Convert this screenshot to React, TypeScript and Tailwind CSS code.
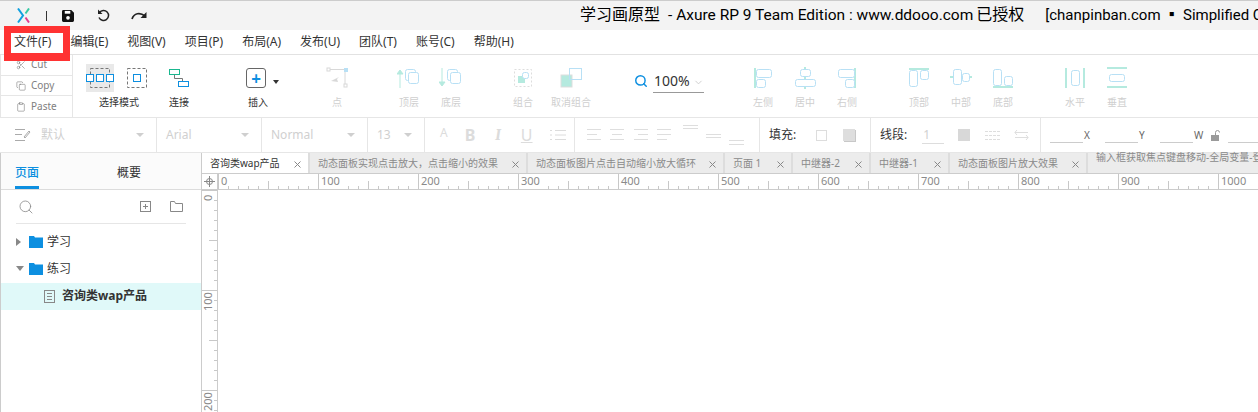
import { ChevronDown, Clipboard, Copy, Scissors, Search } from 'lucide-react';

const menus = ['编辑(E)', '视图(V)', '项目(P)', '布局(A)', '发布(U)', '团队(T)', '账号(C)', '帮助(H)'];

const tabs = [
    { title: '咨询类wap产品', width: 'w-[108px]' },
    { title: '动态面板实现点击放大，点击缩小的效果', width: 'w-[218px]' },
    { title: '动态面板图片点击自动缩小放大循环', width: 'w-[197px]' },
    { title: '页面 1', width: 'w-[68px]' },
    { title: '中继器-2', width: 'w-[78px]' },
    { title: '中继器-1', width: 'w-[79px]' },
    { title: '动态面板图片放大效果', width: 'w-[138px]' },
];

const clipboardItems = [
    { label: 'Cut', icon: Scissors },
    { label: 'Copy', icon: Copy },
    { label: 'Paste', icon: Clipboard },
];

function Box({ x, y, w, h }: { x: number; y: number; w: number; h: number }) {
    return <rect x={x + 0.5} y={y + 0.5} width={w} height={h} rx={2} fill="white" stroke="#b8e0f5" />;
}

function Bar({ x, y, w, h }: { x: number; y: number; w: number; h: number }) {
    return <rect x={x} y={y} width={w} height={h} fill="#b5eadf" />;
}

function ToolItem({
    label,
    width,
    dim = true,
    children,
}: {
    label: string;
    width: string;
    dim?: boolean;
    children: React.ReactNode;
}) {
    return (
        <div className={`flex shrink-0 flex-col items-center ${width}`}>
            <div className="flex h-[36px] items-center justify-center">{children}</div>
            <div className={`-mt-[1px] text-[10px] leading-[14px] ${dim ? 'text-[#cfcfcf]' : 'text-[#333]'}`}>
                {label}
            </div>
        </div>
    );
}

function Icon({ children, w = 24 }: { children: React.ReactNode; w?: number }) {
    return (
        <svg width={w} height={24} viewBox={`0 0 ${w} 24`}>
            {children}
        </svg>
    );
}

function Caret() {
    return <span className="h-0 w-0 border-x-[4px] border-t-[4px] border-x-transparent border-t-[#cfcfcf]" />;
}

function FormatCell({ label, width, icon }: { label: string; width: string; icon?: boolean }) {
    return (
        <div className={`flex shrink-0 items-center justify-between border-r border-[#e6e6e6] pr-[12px] ${width}`}>
            <div className="flex items-center">
                {icon && (
                    <svg width={16} height={14} viewBox="0 0 16 14" className="ml-[15px] mr-[10px]">
                        <path d="M0 1.5h10M0 6.5h7M0 12.5h10" stroke="#aaa" fill="none" />
                        <path d="M9 9l5-6 1 1-5 6z" stroke="#aaa" fill="none" />
                    </svg>
                )}
                <span className={`text-[12px] text-[#d0d0d0] ${icon ? '' : 'ml-[9px]'}`}>{label}</span>
            </div>
            <Caret />
        </div>
    );
}

function HorizontalRuler() {
    const ticks = Array.from({ length: 105 }, (_, i) => i);
    // ticks right after a label are hidden by the number
    const hidden = (i: number) => {
        if (i < 10) return false;
        const step = i % 10;
        return step === 1 || step === 2 || (i >= 100 && step === 3);
    };
    return (
        <svg width={1041} height={15} className="block">
            {ticks
                .filter((i) => !hidden(i))
                .map((i) => {
                    const x = i * 10 + 0.5;
                    const h = i % 10 === 0 ? 15 : i % 5 === 0 ? 8 : 3;
                    return <line key={i} x1={x} x2={x} y1={15 - h} y2={15} stroke="#c8c8c8" />;
                })}
            {Array.from({ length: 11 }, (_, i) => (
                <text key={i} x={i * 100 + 3} y={11} fontSize={11} fill="#8a8a8a">
                    {i * 100}
                </text>
            ))}
        </svg>
    );
}

function VerticalRuler() {
    const ticks = Array.from({ length: 23 }, (_, i) => i);
    return (
        <svg width={15} height={222} className="block shrink-0">
            {ticks.map((i) => {
                const y = i * 10 + 0.5;
                const w = i % 10 === 0 ? 15 : i % 5 === 0 ? 8 : 3;
                return <line key={i} y1={y} y2={y} x1={15 - w} x2={15} stroke="#c8c8c8" />;
            })}
            {[0, 100, 200].map((n) => (
                <text
                    key={n}
                    x={0}
                    y={0}
                    fontSize={11}
                    fill="#8a8a8a"
                    transform={`translate(10 ${n + 3 + (n === 0 ? 8 : 18)}) rotate(-90)`}
                >
                    {n}
                </text>
            ))}
        </svg>
    );
}

function Folder() {
    return (
        <svg width={14} height={12} viewBox="0 0 14 12" className="shrink-0">
            <path d="M0 0h5l1 1.5h8V12H0z" fill="#0d8fe0" />
        </svg>
    );
}

function CloseIcon() {
    return (
        <svg width={7} height={7} viewBox="0 0 7 7" className="mt-[2px] shrink-0">
            <path d="M0.5 0.5l6 6M6.5 0.5l-6 6" stroke="#888" />
        </svg>
    );
}

export default function App() {
    return (
        <div
            className="relative h-[412px] w-[1258px] overflow-hidden bg-white text-[12px] text-[#333]"
            style={{ fontFamily: '"Noto Sans", "Noto Sans CJK SC", sans-serif' }}
        >
            {/* title bar */}
            <div className="flex h-[30px] items-center overflow-hidden border-t border-[#cccccc] bg-[#f3f3f3]">
                <svg width={13} height={15} viewBox="0 0 13 15" className="ml-[17px] shrink-0">
                    <path d="M1 0.5l5 7-5 7" stroke="#10a0e0" strokeWidth={2} fill="none" />
                    <path d="M12 0.5L8.5 5.5" stroke="#35c9a5" strokeWidth={2} fill="none" />
                    <path d="M8.5 9.5l3.5 5" stroke="#e5398d" strokeWidth={2} fill="none" />
                </svg>
                <div className="ml-[16px] h-[10px] w-px shrink-0 bg-[#333]" />
                <svg width={12} height={12} viewBox="0 0 13 13" className="ml-[15px] shrink-0">
                    <path d="M0 1.5A1.5 1.5 0 0 1 1.5 0H10l3 3v8.5A1.5 1.5 0 0 1 11.5 13h-10A1.5 1.5 0 0 1 0 11.5z" fill="#111" />
                    <rect x={3} y={1} width={6} height={3} fill="white" />
                    <circle cx={6.5} cy={8.5} r={2} fill="white" />
                </svg>
                <svg width={13} height={13} viewBox="0 0 13 13" className="ml-[23px] shrink-0">
                    <path d="M2.5 3.5A5 5 0 1 1 2 8.5" stroke="#222" strokeWidth={1.5} fill="none" />
                    <path d="M1 0.5v4.5h4.5z" fill="#222" />
                </svg>
                <svg width={16} height={9} viewBox="0 0 16 9" className="ml-[21px] shrink-0">
                    <path d="M1 8C3 2 9 1 14 5" stroke="#222" strokeWidth={1.7} fill="none" />
                    <path d="M15.5 1v6h-6z" fill="#222" />
                </svg>
                <div
                    className="-mt-[2px] ml-[433px] flex shrink-0 items-center whitespace-nowrap text-[16px] leading-[24px] text-black"
                    style={{ fontFamily: 'Roboto, "Noto Sans CJK SC", sans-serif' }}
                >
                    <span>学习画原型</span>
                    <span className="ml-[8px] text-[15.5px]">- Axure RP 9 Team Edition : www.ddooo.com</span>
                    <span className="ml-[3px]">已授权</span>
                    <span className="ml-[21px] text-[15px]">[chanpinban.com ▪ Simplified Chinese</span>
                </div>
            </div>

            {/* menu bar */}
            <div className="flex h-[25px] items-center border-b border-[#e2e2e2] pl-[14px] text-[12px]">
                <span className="mr-[19px] text-[#333]">文件(F)</span>
                {menus.map((m) => (
                    <span key={m} className="mr-[19px] whitespace-nowrap">
                        {m}
                    </span>
                ))}
            </div>

            {/* toolbar */}
            <div className="flex h-[63px] border-b border-[#e6e6e6]">
                <div className="flex w-[73px] shrink-0 flex-col border-r border-l border-[#e6e6e6] text-[10px] text-[#808080]">
                    {clipboardItems.map(({ label, icon: ItemIcon }, i) => (
                        <div
                            key={label}
                            className={`flex h-[21px] items-center pl-[15px] ${i < 2 ? 'border-b border-[#e6e6e6]' : ''}`}
                        >
                            <ItemIcon size={10} strokeWidth={1.2} className="mr-[5px] text-[#666]" />
                            {label}
                        </div>
                    ))}
                </div>
                <div className="flex pt-[5px]">
                    <ToolItem label="选择模式" width="w-[82px] ml-[5px]" dim={false}>
                        <div className="mr-[5px] flex items-center">
                            <svg width={28} height={28} viewBox="0 0 28 28" className="bg-[#e9e9e9]">
                                <rect x={4.5} y={4.5} width={19} height={19} fill="none" stroke="#777" strokeDasharray="3 2" />
                                <g fill="white" stroke="#0d8fe0">
                                    <rect x={0.5} y={10.5} width={7} height={7} />
                                    <rect x={10.5} y={10.5} width={7} height={7} />
                                    <rect x={20.5} y={10.5} width={7} height={7} />
                                </g>
                            </svg>
                            <svg width={20} height={20} viewBox="0 0 20 20" className="ml-[13px]">
                                <rect x={0.5} y={0.5} width={19} height={19} fill="none" stroke="#777" strokeDasharray="3 2" />
                                <rect x={6.5} y={6.5} width={7} height={7} fill="white" stroke="#0d8fe0" />
                            </svg>
                        </div>
                    </ToolItem>
                    <ToolItem label="连接" width="w-[38px]" dim={false}>
                        <Icon w={22}>
                            <rect x={1.5} y={3.5} width={10} height={5} fill="white" stroke="#1ab78f" />
                            <rect x={10.5} y={15.5} width={10} height={5} fill="white" stroke="#0d8fe0" />
                            <path d="M6.5 9v3.5h8V15" stroke="#777" fill="none" />
                        </Icon>
                    </ToolItem>
                    <ToolItem label="插入" width="w-[40px] ml-[40px]" dim={false}>
                        <div className="relative mr-[4px]">
                            <div className="flex h-[20px] w-[20px] items-center justify-center rounded-[3px] border border-[#666] text-[17px] font-bold leading-none text-[#0d8fe0]">
                                +
                            </div>
                            <span className="absolute left-[27px] top-[12px] h-0 w-0 border-x-[3.5px] border-t-[4px] border-x-transparent border-t-[#333]" />
                        </div>
                    </ToolItem>
                    <ToolItem label="点" width="w-[42px] ml-[38px]">
                        <Icon>
                            <path d="M4 3.5h16v16" stroke="#d8d8d8" fill="none" />
                            <rect x={2} y={2} width={3} height={3} fill="white" stroke="#d8d8d8" />
                            <rect x={19} y={2} width={4} height={4} fill="#b8e0f5" />
                            <rect x={19} y={18} width={3} height={3} fill="white" stroke="#d8d8d8" />
                            <path d="M6 15l8-4-2 2 1 3z" fill="#d8d8d8" />
                        </Icon>
                    </ToolItem>
                    <ToolItem label="顶层" width="w-[42px] ml-[30px]">
                        <Icon>
                            <path d="M3 22V5M0 8l3-4 3 4z" stroke="#b5eadf" fill="#b5eadf" />
                            <Box x={8} y={3} w={10} h={11} />
                            <Box x={11} y={6} w={10} h={11} />
                        </Icon>
                    </ToolItem>
                    <ToolItem label="底层" width="w-[42px]">
                        <Icon>
                            <path d="M3 2v17M0 16l3 4 3-4z" stroke="#b5eadf" fill="#b5eadf" />
                            <Box x={8} y={3} w={10} h={11} />
                            <Box x={11} y={6} w={10} h={11} />
                        </Icon>
                    </ToolItem>
                    <ToolItem label="组合" width="w-[42px] ml-[30px]">
                        <Icon>
                            <rect x={3.5} y={3.5} width={17} height={17} fill="none" stroke="#ddd" strokeDasharray="2 2" />
                            <rect x={7} y={10} width={7} height={7} fill="#b5eadf" />
                            <Box x={11} y={6} w={6} h={6} />
                        </Icon>
                    </ToolItem>
                    <ToolItem label="取消组合" width="w-[54px]">
                        <Icon>
                            <rect x={2} y={9} width={11} height={12} fill="#b5eadf" stroke="#ddd" />
                            <rect x={10.5} y={2.5} width={12} height={11} fill="none" stroke="#b8e0f5" />
                        </Icon>
                    </ToolItem>
                    <div className="ml-[36px] flex h-[42px] w-[70px] shrink-0 items-center">
                        <Search size={14} strokeWidth={2.5} className="text-[#0d8fe0]" />
                        <div className="ml-[5px] flex h-[24px] w-[51px] items-center justify-between border-b border-[#999] pl-px text-[14px] leading-none">
                            100%
                            <ChevronDown size={11} className="mt-[3px] text-[#ccc]" />
                        </div>
                    </div>
                    <ToolItem label="左侧" width="w-[42px] ml-[38px]">
                        <Icon>
                            <Bar x={3} y={2} w={2} h={20} />
                            <Box x={5} y={3} w={15} h={8} />
                            <Box x={5} y={13} w={9} h={8} />
                        </Icon>
                    </ToolItem>
                    <ToolItem label="居中" width="w-[42px]">
                        <Icon>
                            <Bar x={11} y={1} w={2} h={22} />
                            <Box x={7} y={3} w={10} h={7} />
                            <Box x={2} y={13} w={20} h={7} />
                        </Icon>
                    </ToolItem>
                    <ToolItem label="右侧" width="w-[42px]">
                        <Icon>
                            <Bar x={19} y={2} w={2} h={20} />
                            <Box x={3} y={3} w={16} h={8} />
                            <Box x={10} y={13} w={9} h={8} />
                        </Icon>
                    </ToolItem>
                    <ToolItem label="顶部" width="w-[42px] ml-[30px]">
                        <Icon>
                            <Bar x={2} y={2} w={20} h={2} />
                            <Box x={2} y={4} w={8} h={16} />
                            <Box x={13} y={4} w={8} h={9} />
                        </Icon>
                    </ToolItem>
                    <ToolItem label="中部" width="w-[42px]">
                        <Icon>
                            <Bar x={1} y={10} w={22} h={2} />
                            <Box x={4} y={3} w={8} h={15} />
                            <Box x={13} y={7} w={7} h={8} />
                        </Icon>
                    </ToolItem>
                    <ToolItem label="底部" width="w-[42px]">
                        <Icon>
                            <Bar x={2} y={20} w={20} h={2} />
                            <Box x={2} y={3} w={8} h={16} />
                            <Box x={13} y={10} w={8} h={9} />
                        </Icon>
                    </ToolItem>
                    <ToolItem label="水平" width="w-[42px] ml-[30px]">
                        <Icon>
                            <Bar x={2} y={2} w={2} h={20} />
                            <Bar x={20} y={2} w={2} h={20} />
                            <Box x={8} y={4} w={8} h={15} />
                        </Icon>
                    </ToolItem>
                    <ToolItem label="垂直" width="w-[42px]">
                        <Icon>
                            <Bar x={2} y={1} w={20} h={2} />
                            <Bar x={2} y={20} w={20} h={2} />
                            <Box x={4} y={8} w={15} h={7} />
                        </Icon>
                    </ToolItem>
                </div>
            </div>

            {/* format bar */}
            <div className="flex h-[35px] border-b border-[#e6e6e6]">
                <FormatCell label="默认" width="w-[157px]" icon />
                <FormatCell label="Arial" width="w-[105px]" />
                <FormatCell label="Normal" width="w-[106px]" />
                <FormatCell label="13" width="w-[57px]" />
                <div className="flex w-[150px] shrink-0 items-center gap-[17px] border-r border-[#e6e6e6] pl-[15px] text-[16px] leading-none text-[#dcdcdc]">
                    <span className="-mt-[4px] text-[12px]">A</span>
                    <span className="font-bold">B</span>
                    <span className="px-[3px] font-serif font-bold italic">I</span>
                    <span className="underline">U</span>
                    <svg width={16} height={12} viewBox="0 0 16 12">
                        <path d="M5 1.5h11M5 6h11M5 10.5h11M0 1.5h2M0 6h2M0 10.5h2" stroke="#dcdcdc" />
                    </svg>
                </div>
                <div className="flex w-[185px] shrink-0 items-center border-r border-[#e6e6e6] pl-[12px]">
                    <svg width={160} height={24} viewBox="0 0 160 24">
                        <path
                            d="M0 6.5h14M0 11.5h10M0 16.5h14M23 6.5h14M25 11.5h10M23 16.5h14M47 6.5h14M51 11.5h10M47 16.5h14M70 6.5h14M70 11.5h14M70 16.5h10M96 2.5h15M96 5.5h15M119 11.5h15M119 14.5h15M142 17.5h15M142 21.5h15"
                            stroke="#dedede"
                        />
                    </svg>
                </div>
                <div className="flex w-[111px] shrink-0 items-center border-r border-[#e6e6e6] pl-[9px]">
                    <span className="text-[12px]">填充:</span>
                    <span className="ml-[20px] h-[11px] w-[11px] border border-[#ddd]" />
                    <span className="ml-[16px] h-[12px] w-[12px] bg-[#dedede] shadow-[1px_1px_0_#c8c8c8]" />
                </div>
                <div className="flex w-[170px] shrink-0 items-center border-r border-[#e6e6e6] pl-[9px]">
                    <span className="text-[12px]">线段:</span>
                    <span className="ml-[15px] w-[22px] border-b border-[#ddd] pl-[1px] text-[12px] leading-[16px] text-[#d0d0d0]">1</span>
                    <span className="ml-[14px] h-[12px] w-[12px] bg-[#d8d8d8]" />
                    <svg width={15} height={11} viewBox="0 0 15 11" className="ml-[15px]">
                        <path d="M0 1.5h15M0 5.5h15M0 9.5h15" stroke="#dedede" strokeDasharray="3 1" />
                    </svg>
                    <svg width={15} height={12} viewBox="0 0 15 12" className="ml-[14px]">
                        <path d="M1 3.5h13M3 1L.8 3.5 3 6M1 8.5h13M12 6l2.2 2.5L12 11" stroke="#dedede" fill="none" />
                    </svg>
                </div>
                <div className="flex items-center pl-[9px] text-[10px] text-[#666]">
                    <span className="mt-[4px] h-[11px] w-[33px] border-b border-[#ccc]" />
                    <span className="w-[22px] pl-[1px]">X</span>
                    <span className="mt-[4px] h-[11px] w-[33px] border-b border-[#ccc]" />
                    <span className="w-[22px] pl-[1px]">Y</span>
                    <span className="mt-[4px] h-[11px] w-[33px] border-b border-[#ccc]" />
                    <span className="w-[18px] pl-[1px]">W</span>
                    <svg width={9} height={11} viewBox="0 0 9 11">
                        <rect y={5} width={8} height={6} fill="#9a9a9a" />
                        <path d="M4.5 5V2.5a2 2 0 0 1 4 0" stroke="#9a9a9a" fill="none" />
                    </svg>
                    <span className="ml-[8px] mt-[4px] h-[11px] w-[40px] border-b border-[#ccc]" />
                </div>
            </div>

            {/* main */}
            <div className="flex h-[259px]">
                {/* left panel */}
                <div className="w-[202px] shrink-0 border-r border-l border-[#cccccc]">
                    <div className="flex h-[37px] border-b border-[#dcdcdc] bg-[#fbfbfb] text-[12px]">
                        <div className="ml-[14px] mt-[11px] h-[25px] w-[24px] border-b-[3px] border-[#0d8fe0] font-medium text-[#0d8fe0]">
                            页面
                        </div>
                        <div className="ml-[78px] mt-[11px]">概要</div>
                    </div>
                    <div className="mx-[15px] flex h-[34px] items-center border-b border-[#e6e6e6] pl-[2px]">
                        <Search size={16} strokeWidth={1.2} className="text-[#888]" />
                        <svg width={11} height={11} viewBox="0 0 11 11" className="ml-[106px]">
                            <rect x={0.5} y={0.5} width={10} height={10} fill="none" stroke="#888" />
                            <path d="M5.5 3v5M3 5.5h5" stroke="#888" />
                        </svg>
                        <svg width={13} height={11} viewBox="0 0 13 11" className="ml-[19px]">
                            <path d="M.5 10.5V.5h4l1 2h7v8z" fill="none" stroke="#888" />
                        </svg>
                    </div>
                    <div className="mt-[5px] flex h-[27px] items-center pb-[2px] pl-[15px]">
                        <span className="h-0 w-0 border-y-[4px] border-l-[5px] border-y-transparent border-l-[#888]" />
                        <span className="ml-[8px]"><Folder /></span>
                        <span className="ml-[4px]">学习</span>
                    </div>
                    <div className="flex h-[27px] items-center pb-[2px] pl-[15px]">
                        <span className="h-0 w-0 border-x-[4px] border-t-[5px] border-x-transparent border-t-[#888]" />
                        <span className="ml-[5px]"><Folder /></span>
                        <span className="ml-[4px]">练习</span>
                    </div>
                    <div className="flex h-[27px] items-center bg-[#e0f9f9] pb-[1px] pl-[43px]">
                        <svg width={11} height={13} viewBox="0 0 11 13">
                            <rect x={0.5} y={0.5} width={10} height={12} fill="none" stroke="#888" />
                            <path d="M3 3.5h5M3 6.5h5M3 9.5h5" stroke="#888" />
                        </svg>
                        <span className="ml-[7px] font-bold">咨询类wap产品</span>
                    </div>
                </div>

                {/* canvas */}
                <div className="min-w-0 flex-1">
                    <div className="flex h-[21px] border-b border-[#cccccc] bg-[#ececec] text-[10px]">
                        {tabs.map((tab, i) => (
                            <div
                                key={tab.title}
                                className={`flex shrink-0 items-center justify-between border-r-2 border-[#dddddd] pl-[8px] pr-[7px] ${tab.width} ${
                                    i === 0 ? 'bg-white text-[#333]' : 'text-[#8a8a8a]'
                                }`}
                            >
                                <span className="whitespace-nowrap">{tab.title}</span>
                                <CloseIcon />
                            </div>
                        ))}
                        <div className="-mt-[3px] overflow-hidden whitespace-nowrap pl-[8px] text-[#8a8a8a]">输入框获取焦点键盘移动-全局变量-登录</div>
                    </div>
                    <div className="flex h-[16px] border-b border-[#cccccc]">
                        <div className="flex w-[16px] shrink-0 items-center justify-center border-r border-[#cccccc]">
                            <svg width={11} height={11} viewBox="0 0 11 11">
                                <circle cx={5.5} cy={5.5} r={3} fill="none" stroke="#888" />
                                <path d="M5.5 0v11M0 5.5h11" stroke="#888" />
                            </svg>
                        </div>
                        <div className="min-w-0 flex-1 overflow-hidden">
                            <HorizontalRuler />
                        </div>
                    </div>
                    <div className="flex">
                        <div className="w-[16px] border-r border-[#cccccc]">
                            <VerticalRuler />
                        </div>
                    </div>
                </div>
            </div>

            {/* highlight box over the file menu */}
            <div className="absolute left-[4px] top-[26px] h-[35px] w-[66px] border-[7px] border-b-[8px] border-[#ff3333]" />
        </div>
    );
}
